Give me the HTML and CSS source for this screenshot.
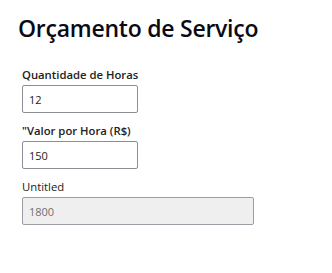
FILE: index.html
```html
<!DOCTYPE html>
<html lang="pt">
<head>
<meta charset="utf-8">
<title>Orçamento de Serviço</title>
<link rel="stylesheet" href="styles.css">
</head>
<body>
<div class="page">
  <h1 class="title">Orçamento de Serviço</h1>
  <div class="form">
    <div class="field">
      <label class="label" for="horas">Quantidade de Horas</label>
      <input class="input" id="horas" type="text" value="12">
    </div>
    <div class="field">
      <label class="label" for="valor">"Valor por Hora (R$)</label>
      <input class="input" id="valor" type="text" value="150">
    </div>
    <div class="field">
      <label class="label label-plain" for="total">Untitled</label>
      <input class="input input-wide" id="total" type="text" value="1800" disabled>
    </div>
  </div>
</div>
</body>
</html>
```
FILE: styles.css
```css
html, body {
  margin: 0;
  padding: 0;
  background: #ffffff;
}
body {
  font-family: "Open Sans", "Noto Sans", sans-serif;
  color: #1a1a1a;
}
.page {
  padding: 12px 0 0 18px;
}
.title {
  margin: 0;
  font-size: 23px;
  line-height: 32px;
  font-weight: 600;
  color: #0a0a14;
  letter-spacing: -0.25px;
}
.form {
  margin-top: 23px;
  padding-left: 4px;
}
.field {
  margin-bottom: 10px;
}
.label {
  display: block;
  font-size: 11.3px;
  line-height: 16px;
  font-weight: 600;
  color: #222222;
  margin-bottom: 2px;
}
.label-plain {
  font-weight: 400;
  color: #1a1a1a;
}
.input {
  display: block;
  box-sizing: border-box;
  width: 116px;
  height: 28px;
  margin: 0;
  padding: 0 6px;
  border: 1px solid #8a8f96;
  border-radius: 2px;
  background: #ffffff;
  font-family: "Open Sans", "Noto Sans", sans-serif;
  font-size: 11px;
  color: #222222;
  outline: none;
}
.input-wide {
  width: 232px;
}
.input:disabled {
  background: #efefef;
  border-color: #9a9ea4;
  color: #6f6f6f;
}
```
